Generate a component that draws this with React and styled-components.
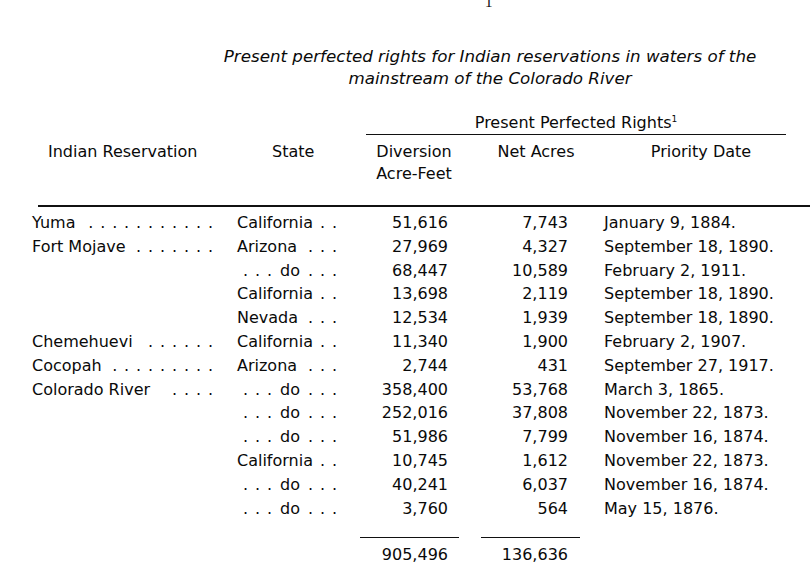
import React from "react";
import styled, { createGlobalStyle } from "styled-components";

const Global = createGlobalStyle`
  html, body { margin: 0; padding: 0; background: #fff; }
  #root { width: 810px; height: 574px; }
`;

const Page = styled.div`
  width: 810px;
  height: 574px;
  overflow: hidden;
  background: #fff;
  color: #0a0a0a;
  font-family: "DejaVu Sans", "Liberation Sans", sans-serif;
  font-size: 16px;
  display: flex;
  flex-direction: column;
`;

const PageNum = styled.div`
  margin-top: -6px;
  height: 16px;
  line-height: 16px;
  padding-left: 485px;
  font-family: "Liberation Serif", serif;
  font-size: 15px;
`;

const Title = styled.h1`
  margin: 35px 0 0 0;
  padding-left: 170px;
  text-align: center;
  font-size: 16.7px;
  font-weight: normal;
  font-style: italic;
  line-height: 22px;
`;

const Table = styled.div`
  padding-left: 32px;
  display: flex;
  flex-direction: column;
`;

const HeadGrid = styled.div`
  display: grid;
  grid-template-columns: 205px 129px 96px 148px 176px;
  row-gap: 6.5px;
  margin-top: 22.5px;
  line-height: 22px;
`;

const Spanner = styled.div`
  grid-column: 3 / 6;
  text-align: center;
  border-bottom: 1.5px solid #111;
`;

const Sup = styled.sup`
  font-size: 9px;
  line-height: 0;
  vertical-align: 6px;
`;

const HeadCell = styled.div`
  grid-row: 2;
  text-align: ${(p) => p.$align || "center"};
  padding-left: ${(p) => p.$pl || 0}px;
`;

const ThickRule = styled.div`
  margin: 19.5px 0 0 6px;
  border-top: 2px solid #111;
`;

const Rows = styled.div`
  margin-top: 4.5px;
  display: flex;
  flex-direction: column;
`;

const Row = styled.div`
  display: grid;
  grid-template-columns: 205px 103px 108px 120px 1fr;
  line-height: 23.8px;
  white-space: nowrap;
`;

const LeaderCell = styled.div`
  display: flex;
  justify-content: space-between;
  padding-right: ${(p) => p.$pr}px;
  padding-left: ${(p) => p.$pl || 0}px;
`;

const Leader = styled.span`
  word-spacing: 1.8px;
`;

const Num = styled.div`
  text-align: right;
`;

const DateCell = styled.div`
  padding-left: 36px;
`;

const TotalRow = styled(Row)`
  margin-top: 17px;
`;

const TotalCell = styled.div`
  grid-column: ${(p) => p.$col};
  margin-left: ${(p) => p.$ml}px;
  margin-right: -${(p) => p.$mr}px;
  padding-right: ${(p) => p.$mr}px;
  padding-top: 4.5px;
  border-top: 1.5px solid #111;
  text-align: right;
`;

const dots = (n) => Array(n).fill(".").join(" ");

const rows = [
  ["Yuma", 11, "California", 2, "51,616", "7,743", "January 9, 1884."],
  ["Fort Mojave", 7, "Arizona", 3, "27,969", "4,327", "September 18, 1890."],
  ["", 0, "do", 3, "68,447", "10,589", "February 2, 1911."],
  ["", 0, "California", 2, "13,698", "2,119", "September 18, 1890."],
  ["", 0, "Nevada", 3, "12,534", "1,939", "September 18, 1890."],
  ["Chemehuevi", 6, "California", 2, "11,340", "1,900", "February 2, 1907."],
  ["Cocopah", 9, "Arizona", 3, "2,744", "431", "September 27, 1917."],
  ["Colorado River", 4, "do", 3, "358,400", "53,768", "March 3, 1865."],
  ["", 0, "do", 3, "252,016", "37,808", "November 22, 1873."],
  ["", 0, "do", 3, "51,986", "7,799", "November 16, 1874."],
  ["", 0, "California", 2, "10,745", "1,612", "November 22, 1873."],
  ["", 0, "do", 3, "40,241", "6,037", "November 16, 1874."],
  ["", 0, "do", 3, "3,760", "564", "May 15, 1876."],
];

export default function App() {
  return (
    <Page>
      <Global />
      <PageNum>1</PageNum>
      <Title>
        Present perfected rights for Indian reservations in waters of the
        <br />
        mainstream of the Colorado River
      </Title>
      <Table>
        <HeadGrid>
          <Spanner>
            Present Perfected Rights<Sup>1</Sup>
          </Spanner>
          <HeadCell $align="left" $pl={16}>Indian Reservation</HeadCell>
          <HeadCell $align="left" $pl={35}>State</HeadCell>
          <HeadCell>
            Diversion
            <br />
            Acre-Feet
          </HeadCell>
          <HeadCell>Net Acres</HeadCell>
          <HeadCell $pl={6}>Priority Date</HeadCell>
        </HeadGrid>
        <ThickRule />
        <Rows>
          {rows.map((r, i) => (
            <Row key={i}>
              <LeaderCell $pr={24}>
                <span>{r[0]}</span>
                <Leader>{r[1] ? dots(r[1]) : ""}</Leader>
              </LeaderCell>
              {r[2] === "do" ? (
                <LeaderCell $pr={3} $pl={6}>
                  <Leader>{dots(3)}</Leader>
                  <span>do</span>
                  <Leader>{dots(3)}</Leader>
                </LeaderCell>
              ) : (
                <LeaderCell $pr={3}>
                  <span>{r[2]}</span>
                  <Leader>{dots(r[3])}</Leader>
                </LeaderCell>
              )}
              <Num>{r[4]}</Num>
              <Num>{r[5]}</Num>
              <DateCell>{r[6]}</DateCell>
            </Row>
          ))}
        </Rows>
        <TotalRow>
          <TotalCell $col={3} $ml={20} $mr={11}>905,496</TotalCell>
          <TotalCell $col={4} $ml={33} $mr={12}>136,636</TotalCell>
        </TotalRow>
      </Table>
    </Page>
  );
}
